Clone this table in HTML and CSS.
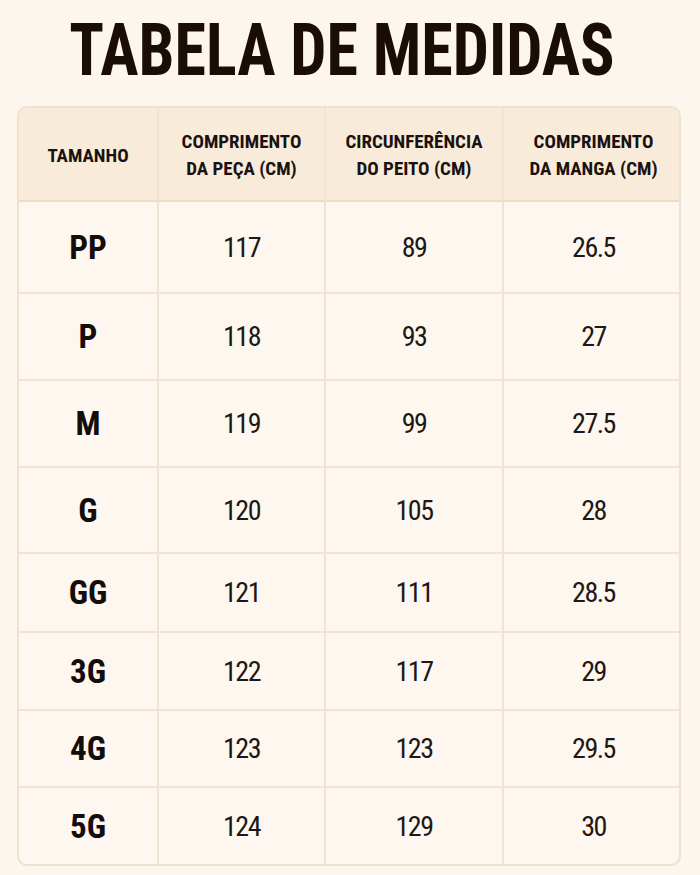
FILE: index.html
```html
<!DOCTYPE html>
<html lang="pt">
<head>
<meta charset="utf-8">
<title>Tabela de Medidas</title>
<link rel="stylesheet" href="styles.css">
</head>
<body>
<main class="page">
  <h1 class="title">TABELA DE MEDIDAS</h1>
  <div class="table">
    <div class="cell head">TAMANHO</div>
    <div class="cell head">COMPRIMENTO<br>DA PEÇA (CM)</div>
    <div class="cell head">CIRCUNFERÊNCIA<br>DO PEITO (CM)</div>
    <div class="cell head">COMPRIMENTO<br>DA MANGA (CM)</div>

    <div class="cell size">PP</div><div class="cell num">117</div><div class="cell num">89</div><div class="cell num">26.5</div>
    <div class="cell size">P</div><div class="cell num">118</div><div class="cell num">93</div><div class="cell num">27</div>
    <div class="cell size">M</div><div class="cell num">119</div><div class="cell num">99</div><div class="cell num">27.5</div>
    <div class="cell size">G</div><div class="cell num">120</div><div class="cell num">105</div><div class="cell num">28</div>
    <div class="cell size">GG</div><div class="cell num">121</div><div class="cell num">111</div><div class="cell num">28.5</div>
    <div class="cell size">3G</div><div class="cell num">122</div><div class="cell num">117</div><div class="cell num">29</div>
    <div class="cell size">4G</div><div class="cell num">123</div><div class="cell num">123</div><div class="cell num">29.5</div>
    <div class="cell size">5G</div><div class="cell num">124</div><div class="cell num">129</div><div class="cell num">30</div>
  </div>
</main>
</body>
</html>
```
FILE: styles.css
```css
html, body {
  margin: 0;
  padding: 0;
  background: #fcf6ee;
}
.page {
  width: 700px;
  height: 875px;
  padding-top: 15px;
  box-sizing: border-box;
  font-family: Roboto, "Liberation Sans", sans-serif;
  font-stretch: 75%;
  color: #1b1311;
}
.title {
  margin: 0;
  font-size: 72px;
  line-height: 72px;
  font-weight: 700;
  text-align: center;
  color: #1a0d08;
  transform: translateX(-8px) scaleX(0.89);
}
.table {
  margin: 19px 0 0 17px;
  width: 664px;
  display: grid;
  grid-template-columns: 140px 167px 178px 179px;
  grid-template-rows: 94px 92px 87px 87px 86px 79px 78px 77px 76px;
  border: 2px solid #efe1cd;
  border-radius: 10px;
  box-sizing: border-box;
  overflow: hidden;
  background: #fdf7ef;
}
.cell {
  display: flex;
  align-items: center;
  justify-content: center;
  text-align: center;
  border-right: 2px solid #f1e4d2;
  border-bottom: 2px solid #f1e4d2;
}
.cell:nth-child(4n) {
  border-right: none;
}
.cell:nth-last-child(-n+4) {
  border-bottom: none;
}
.head {
  background: #f8ebda;
  font-size: 19px;
  line-height: 27px;
  font-weight: 700;
  color: #1a1210;
  padding-top: 2px;
  border-bottom-color: #eddcc6;
}
.size {
  font-size: 33px;
  font-weight: 700;
  color: #150d0b;
}
.num {
  font-size: 28px;
  font-weight: 400;
  letter-spacing: -1.5px;
  color: #1e1715;
}
```
